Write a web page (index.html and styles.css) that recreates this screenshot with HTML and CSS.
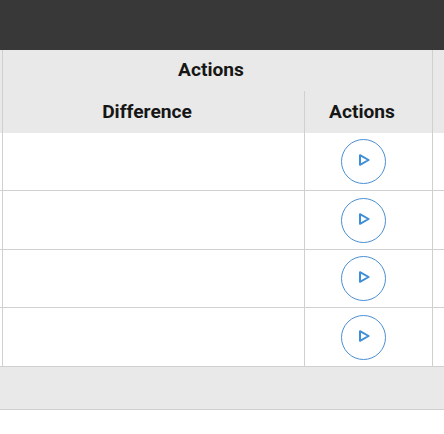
FILE: index.html
```html
<!DOCTYPE html>
<html lang="en">
<head>
    <meta charset="UTF-8">
    <meta name="viewport" content="width=device-width, initial-scale=1.0">
    <title>Actions</title>
    <link rel="stylesheet" href="styles.css">
</head>
<body>
    <div class="topbar"></div>

    <table class="data-table">
        <colgroup>
            <col class="col-stub">
            <col class="col-diff">
            <col class="col-actions">
            <col>
        </colgroup>
        <thead>
            <tr class="head-top">
                <th class="stub"></th>
                <th colspan="2" class="group">Actions</th>
                <th class="rest"></th>
            </tr>
            <tr class="head-sub">
                <th class="stub"></th>
                <th class="plain">Difference</th>
                <th>Actions</th>
                <th class="rest"></th>
            </tr>
        </thead>
        <tbody>
            <tr>
                <td class="stub"></td>
                <td></td>
                <td class="action-cell">
                    <button class="play-btn" type="button">
                        <svg viewBox="0 0 12 12" width="12" height="12"><path d="M2 1.2 L10.6 6 L2 10.8 Z"/></svg>
                    </button>
                </td>
                <td class="rest"></td>
            </tr>
            <tr>
                <td class="stub"></td>
                <td></td>
                <td class="action-cell">
                    <button class="play-btn" type="button">
                        <svg viewBox="0 0 12 12" width="12" height="12"><path d="M2 1.2 L10.6 6 L2 10.8 Z"/></svg>
                    </button>
                </td>
                <td class="rest"></td>
            </tr>
            <tr>
                <td class="stub"></td>
                <td></td>
                <td class="action-cell">
                    <button class="play-btn" type="button">
                        <svg viewBox="0 0 12 12" width="12" height="12"><path d="M2 1.2 L10.6 6 L2 10.8 Z"/></svg>
                    </button>
                </td>
                <td class="rest"></td>
            </tr>
            <tr>
                <td class="stub"></td>
                <td></td>
                <td class="action-cell">
                    <button class="play-btn" type="button">
                        <svg viewBox="0 0 12 12" width="12" height="12"><path d="M2 1.2 L10.6 6 L2 10.8 Z"/></svg>
                    </button>
                </td>
                <td class="rest"></td>
            </tr>
        </tbody>
    </table>

    <div class="table-footer"></div>
</body>
</html>
```

FILE: styles.css
```css
html, body {
    margin: 0;
    padding: 0;
    height: 100%;
    overflow: hidden;
    background: #fff;
}

body {
    font-family: Roboto, "Liberation Sans", sans-serif;
    color: #161616;
}

.topbar {
    height: 50px;
    background: #383838;
}

.data-table {
    width: 444px;
    table-layout: fixed;
    border-collapse: separate;
    border-spacing: 0;
}

.col-stub {
    width: 3px;
}

.col-diff {
    width: 302px;
}

.col-actions {
    width: 128px;
}

th {
    padding: 0 13px 2px 0;
    background: #e9e9e9;
    font-size: 19.2px;
    font-weight: 700;
    text-align: center;
    border-right: 1px solid #d0d0d0;
}

th.rest,
td.rest {
    border-right: 0;
}

.head-top th {
    height: 39px;
}

.head-sub th {
    height: 40px;
}

.head-top .stub {
    padding: 0;
}

td {
    height: 57.4px;
    padding: 0;
    border-right: 1px solid #d0d0d0;
    border-bottom: 1px solid #d0d0d0;
}

.action-cell {
    padding-right: 10px;
    text-align: center;
    vertical-align: top;
}

.play-btn {
    display: inline-flex;
    align-items: center;
    justify-content: center;
    box-sizing: border-box;
    width: 45px;
    height: 45px;
    margin-top: 6.4px;
    padding: 0 0 3px 0;
    background: #fff;
    border: 1px solid #4a90d2;
    border-radius: 50%;
}

.play-btn svg {
    display: block;
    fill: none;
    stroke: #3f8fd6;
    stroke-width: 2;
    stroke-linejoin: round;
}

.table-footer {
    box-sizing: border-box;
    height: 43px;
    background: #e9e9e9;
    border-bottom: 1px solid #d0d0d0;
}
```
